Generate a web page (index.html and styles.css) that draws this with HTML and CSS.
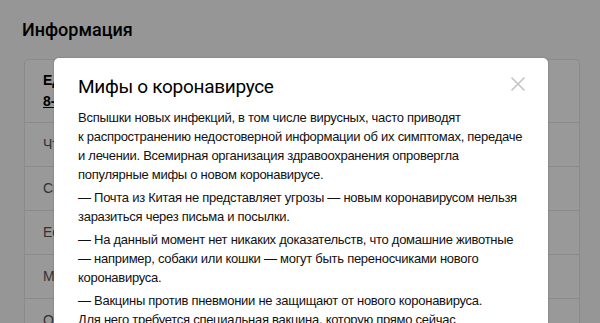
FILE: index.html
```html
<!DOCTYPE html>
<html lang="ru">
<head>
<meta charset="utf-8">
<link rel="stylesheet" href="styles.css">
</head>
<body>
<main class="page">
  <h1 class="page-title">Информация</h1>
  <section class="card">
    <div class="card-head">
      <div class="head-title">Единая горячая линия</div>
      <a class="head-phone" href="#">8-800-2000-112</a>
    </div>
    <div class="row">Что такое коронавирус</div>
    <div class="row">Симптомы и признаки</div>
    <div class="row">Если вы вернулись из-за границы</div>
    <div class="row">Меры профилактики</div>
    <div class="row">Официальные источники</div>
  </section>
</main>
<div class="overlay"></div>
<div class="modal">
  <h2 class="modal-title">Мифы о коронавирусе</h2>
  <button class="modal-close" aria-label="Закрыть">
    <svg width="16" height="16" viewBox="0 0 16 16"><path d="M1.5 1.5L14.5 14.5M14.5 1.5L1.5 14.5" stroke="#c4c4c4" stroke-width="1.6" fill="none"/></svg>
  </button>
  <div class="modal-body">
    <p>Вспышки новых инфекций, в том числе вирусных, часто приводят<br>к&nbsp;распространению недостоверной информации об их симптомах, передаче<br>и&nbsp;лечении. Всемирная организация здравоохранения опровергла<br>популярные мифы о новом коронавирусе.</p>
    <p>— Почта из Китая не представляет угрозы — новым коронавирусом нельзя<br>заразиться через письма и посылки.</p>
    <p>— На данный момент нет никаких доказательств, что домашние животные<br>— например, собаки или кошки — могут быть переносчиками нового<br>коронавируса.</p>
    <p>— Вакцины против пневмонии не защищают от нового коронавируса.<br>Для него требуется специальная вакцина, которую прямо сейчас<br>разрабатывают учёные.</p>
  </div>
</div>
</body>
</html>
```

FILE: styles.css
```css
html, body {
  margin: 0;
  padding: 0;
}
body {
  width: 600px;
  height: 323px;
  overflow: hidden;
  background: #fafafa;
  font-family: "Liberation Sans", Arial, sans-serif;
  color: #222;
  position: relative;
}
.page {
  padding: 16px 20px 0 24px;
}
.page-title {
  margin: 0 0 15px -2px;
  font-family: Roboto, "Noto Sans", sans-serif;
  font-size: 18px;
  font-weight: 500;
  line-height: 28px;
  color: #000;
}
.card {
  width: 554px;
  background: #fff;
  border: 1px solid #e8e8e8;
  border-radius: 4px;
}
.card-head {
  padding: 10px 18px 10px 18px;
  border-bottom: 1px solid #e6e6e6;
  font-weight: 700;
  font-size: 14px;
  line-height: 21px;
  color: #000;
}
.head-phone {
  color: #000;
  text-decoration: underline;
}
.row {
  height: 43px;
  line-height: 43px;
  padding-left: 18px;
  border-bottom: 1px solid #e6e6e6;
  font-size: 14px;
  color: #555;
}
.overlay {
  position: absolute;
  inset: 0;
  background: rgba(0, 0, 0, 0.4);
}
.modal {
  position: absolute;
  left: 54px;
  top: 58px;
  width: 494px;
  height: 300px;
  box-sizing: border-box;
  padding: 15px 24px 0 24px;
  background: #fff;
  border-radius: 5px 5px 0 0;
  box-shadow: 0 0 2px rgba(0, 0, 0, 0.25);
}
.modal-title {
  margin: 0 0 7px 0;
  font-family: Roboto, "Noto Sans", sans-serif;
  font-size: 19px;
  letter-spacing: -0.3px;
  font-weight: 400;
  line-height: 28px;
  color: #000;
}
.modal-close {
  position: absolute;
  top: 18px;
  right: 22px;
  width: 16px;
  height: 16px;
  padding: 0;
  border: 0;
  background: none;
  display: flex;
}
.modal-body {
  font-size: 13px;
  letter-spacing: -0.27px;
  line-height: 19px;
  color: #111;
  white-space: nowrap;
}
.modal-body p {
  margin: 0 0 4px 0;
}
```
